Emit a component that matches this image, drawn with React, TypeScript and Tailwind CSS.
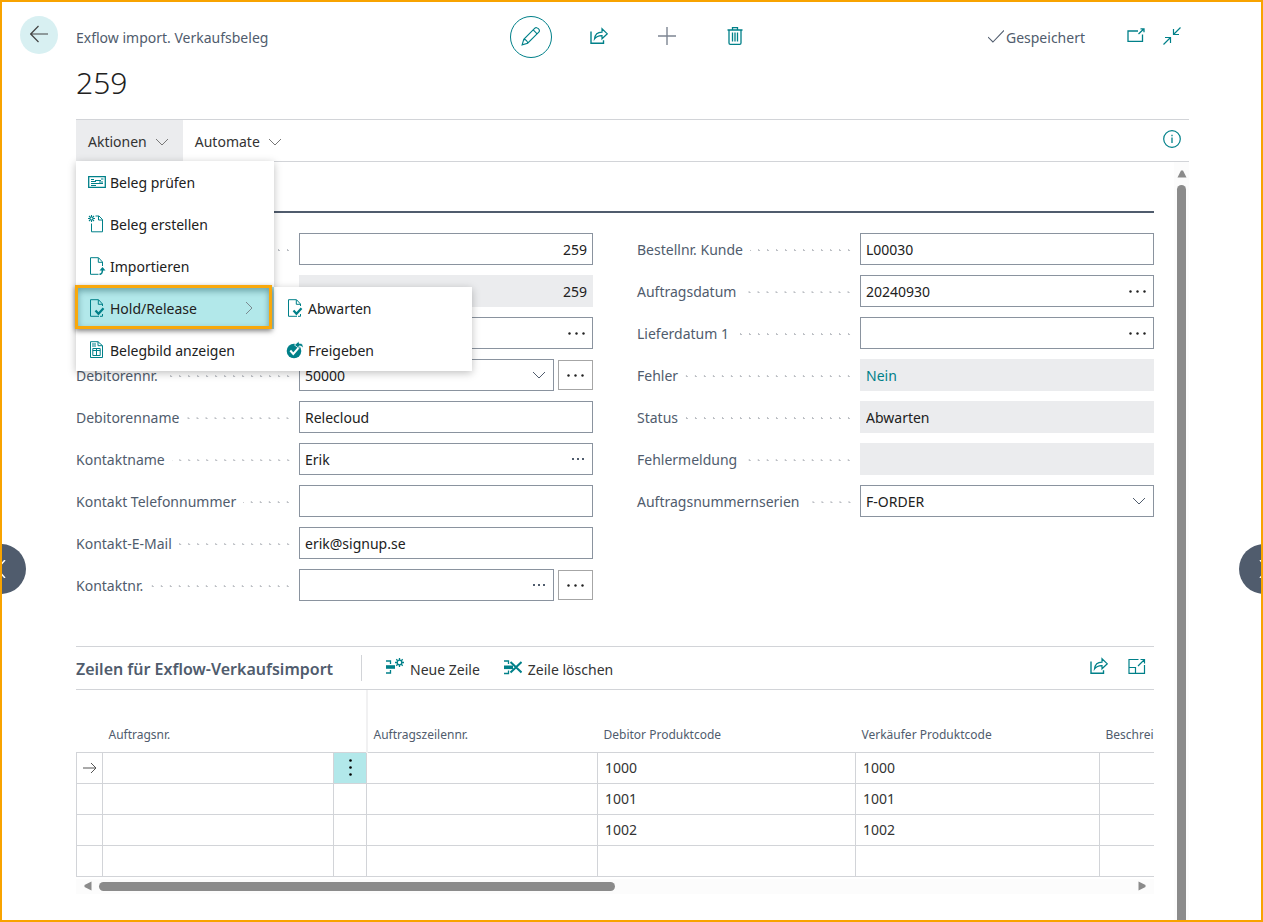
import type { ReactNode } from "react";

type FieldProps = {
  id: string;
  label?: string;
  name?: string;
  value?: string;
  kind?: "text" | "readonly" | "select";
  align?: "left" | "right";
  lookup?: "bold" | "light";
  link?: boolean;
  extra?: boolean;
};

const leftFields: FieldProps[] = [
  { id: "entry-no", name: "Lfd. Nr.", value: "259", align: "right" },
  {
    id: "import-no",
    name: "Importnr.",
    value: "259",
    align: "right",
    kind: "readonly",
  },
  { id: "order-type", name: "Belegart", lookup: "bold" },
  {
    id: "customer-no",
    label: "Debitorennr.",
    value: "50000",
    kind: "select",
    extra: true,
  },
  { id: "customer-name", label: "Debitorenname", value: "Relecloud" },
  { id: "contact-name", label: "Kontaktname", value: "Erik", lookup: "light" },
  { id: "contact-phone", label: "Kontakt Telefonnummer" },
  { id: "contact-mail", label: "Kontakt-E-Mail", value: "erik@signup.se" },
  { id: "contact-no", label: "Kontaktnr.", lookup: "light", extra: true },
];

const rightFields: FieldProps[] = [
  { id: "your-order", label: "Bestellnr. Kunde", value: "L00030" },
  {
    id: "order-date",
    label: "Auftragsdatum",
    value: "20240930",
    lookup: "bold",
  },
  { id: "delivery-date", label: "Lieferdatum 1", lookup: "bold" },
  { id: "error", label: "Fehler", value: "Nein", kind: "readonly", link: true },
  { id: "status", label: "Status", value: "Abwarten", kind: "readonly" },
  { id: "error-message", label: "Fehlermeldung", kind: "readonly" },
  {
    id: "no-series",
    label: "Auftragsnummernserien",
    value: "F-ORDER",
    kind: "select",
  },
];

const lines = [
  { customerCode: "1000", vendorCode: "1000" },
  { customerCode: "1001", vendorCode: "1001" },
  { customerCode: "1002", vendorCode: "1002" },
  { customerCode: "", vendorCode: "" },
];

const Icon = ({
  children,
  className = "h-[18px] w-[18px]",
}: {
  children: ReactNode;
  className?: string;
}) => (
  <svg
    viewBox="0 0 18 18"
    fill="none"
    stroke="currentColor"
    className={`shrink-0 ${className}`}
    aria-hidden="true"
  >
    {children}
  </svg>
);

const ChevronDown = () => (
  <svg
    viewBox="0 0 14 8"
    fill="none"
    stroke="currentColor"
    className="h-2 w-3.5 shrink-0"
    aria-hidden="true"
  >
    <path d="M1 1l6 6 6-6" />
  </svg>
);

const ShareIcon = () => (
  <Icon>
    <path d="M1 4.5v11.8h12.5v-3" strokeWidth="1.4" />
    <path
      d="M4.5 12C5 7.5 8 5.2 12 5.2V1.7L17.3 6.8 12 11.8V8.6C8.500 8.500 6.300 9.500 4.500 12z"
      strokeWidth="1.2"
    />
  </Icon>
);

const DocCheckIcon = () => (
  <Icon>
    <path d="M14.500 7V5L10.500 .7H2.500v16.600h8.500M10.300 .9v4.400h4M12 17.300h2.500V15" />
    <path d="M7.500 11.500l3 3.300 5-5.600" strokeWidth="2.200" />
  </Icon>
);

const Dots = ({ light = false }: { light?: boolean }) =>
  light ? (
    <svg viewBox="0 0 14 2" className="h-0.5 w-3.5" fill="#505c6d">
      <path d="M1 0h2v2H1zM6 0h2v2H6zM11 0h2v2h-2z" />
    </svg>
  ) : (
    <svg viewBox="0 0 17 3" className="h-[3px] w-[17px]" fill="#212121">
      <circle cx="1.500" cy="1.500" r="1.200" />
      <circle cx="8.500" cy="1.500" r="1.200" />
      <circle cx="15.500" cy="1.500" r="1.200" />
    </svg>
  );

const FieldControl = ({
  id,
  label,
  name,
  value = "",
  kind = "text",
  align = "left",
  lookup,
  link,
}: FieldProps) => {
  if (kind === "select") {
    return (
      <div className="relative flex h-8 min-w-0 flex-1 items-center border border-[#8a939f] bg-white">
        <select
          id={id}
          defaultValue={value}
          className="h-full w-full appearance-none bg-transparent pl-[5px] pr-8 pt-0.5 text-[#212121] outline-none"
        >
          <option>{value}</option>
        </select>
        <span className="pointer-events-none absolute right-[7px] text-[#505c6d]">
          <ChevronDown />
        </span>
      </div>
    );
  }
  return (
    <div
      className={`flex h-8 min-w-0 flex-1 items-center border ${
        kind === "readonly"
          ? "border-[#ebecee] bg-[#ebecee]"
          : "border-[#8a939f] bg-white"
      }`}
    >
      <input
        id={id}
        type="text"
        aria-label={label ? undefined : name}
        defaultValue={value}
        readOnly={kind === "readonly"}
        className={`h-full min-w-0 flex-1 bg-transparent px-[5px] outline-none ${
          align === "right" ? "text-right" : "text-left"
        } ${link ? "text-[#008089]" : "text-[#212121]"}`}
      />
      {lookup && (
        <button
          type="button"
          aria-label="Nachschlagen"
          className="flex h-full items-center pr-[7px]"
        >
          <Dots light={lookup === "light"} />
        </button>
      )}
    </div>
  );
};

const Field = (props: FieldProps) => (
  <div className="flex items-center">
    <div className="flex w-[223px] shrink-0 items-center pt-0.5">
      {props.label && (
        <label htmlFor={props.id} className="whitespace-nowrap text-[#505c6d]">
          {props.label}
        </label>
      )}
      <span className="mx-[7px] h-[3px] flex-1 bg-[radial-gradient(circle,#bcbfc4_1px,transparent_1px)] bg-[length:9px_3px] bg-right bg-repeat-x" />
    </div>
    <div className="flex min-w-0 flex-1 items-center gap-1">
      <FieldControl {...props} />
      {props.extra && (
        <button
          type="button"
          aria-label="Mehr anzeigen"
          className="flex h-[30px] w-[35px] items-center justify-center border border-[#a6a6a6]"
        >
          <Dots />
        </button>
      )}
    </div>
  </div>
);

const MenuItem = ({
  icon,
  label,
  active = false,
}: {
  icon: ReactNode;
  label: string;
  active?: boolean;
}) => (
  <button
    type="button"
    role="menuitem"
    className={`relative flex h-[42px] w-full items-center gap-1 pl-3 pr-[21px] text-left text-[#212121] ${
      active ? "bg-[#b2e8ea]" : "bg-white"
    }`}
  >
    <span className="text-[#008089]">{icon}</span>
    <span className="flex-1 whitespace-nowrap pt-0.5">{label}</span>
    {active && (
      <>
        <svg
          viewBox="0 0 8 14"
          fill="none"
          stroke="#7a8a90"
          className="h-3.5 w-2"
          aria-hidden="true"
        >
          <path d="M1 1l6 6-6 6" />
        </svg>
        <span className="absolute -top-0.5 -left-px bottom-0 right-0.5 z-10 border-[3px] border-[#f8a80c] shadow-[0_2px_5px_rgba(0,0,0,0.5),inset_0_3px_6px_rgba(0,60,70,0.4)]" />
      </>
    )}
  </button>
);

const ActionsMenu = () => (
  <div
    role="menu"
    className="absolute left-0 top-full z-20 w-[198px] bg-white shadow-[0_2px_8px_rgba(0,0,0,0.25)]"
  >
    <MenuItem
      label="Beleg prüfen"
      icon={
        <Icon>
          <path d="M.7 3.700h16.600v10.600H.7z" strokeWidth="1.300" />
          <path d="M3 6.500h3M3 8.500h5M3 10.500h12M3 12.500h5M7 7.500h6M11 9h4M13 6h2.500" />
        </Icon>
      }
    />
    <MenuItem
      label="Beleg erstellen"
      icon={
        <Icon>
          <path d="M3.500 8.500v8.300h11V4.500L11 1H7.500M10.500 1v4h4" />
          <path
            d="M3.500 0v7M0 3.500h7M1 1l5 5M6 1L1 6"
            strokeWidth="1.100"
          />
          <circle cx="3.500" cy="3.500" r="1" fill="#fff" stroke="none" />
        </Icon>
      }
    />
    <MenuItem
      label="Importieren"
      icon={
        <Icon>
          <path d="M14.500 9V5L10.500 .7H2.500v16.600h8M10.300 .9v4.400h4" />
          <path d="M11.500 17.300c2.500 0 3-1.300 3-5" strokeWidth="1.600" />
          <path d="M11.500 13.500l3-3.500 3 3.500z" fill="currentColor" stroke="none" />
        </Icon>
      }
    />
    <div className="relative">
      <MenuItem label="Hold/Release" icon={<DocCheckIcon />} active />
      <div
        role="menu"
        className="absolute left-full top-0 w-[198px] bg-white shadow-[0_2px_8px_rgba(0,0,0,0.25)]"
      >
        <MenuItem label="Abwarten" icon={<DocCheckIcon />} />
        <MenuItem
          label="Freigeben"
          icon={
            <Icon>
              <circle
                cx="8"
                cy="10"
                r="7.300"
                fill="currentColor"
                stroke="none"
              />
              <path d="M4.300 9.500l3 3.500 5-5.800" stroke="#fff" strokeWidth="2" />
              <path
                d="M8.500 4L13 0v2.200c3 0 4.500 1.300 4 5-1.200-1.800-2.300-2.200-4-2.200v2.500z"
                fill="currentColor"
                stroke="#fff"
                strokeWidth=".8"
              />
            </Icon>
          }
        />
      </div>
    </div>
    <MenuItem
      label="Belegbild anzeigen"
      icon={
        <Icon>
          <path d="M2.500 16.500V.7H10l4.500 4v11.800zM10 .7v4h4.500M4 3h4M4 5h4" />
          <path d="M4.800 7.500h7.400v7H4.800zM4.800 9.500h7.400M8.500 7.500v7" />
        </Icon>
      }
    />
  </div>
);

const Header = () => (
  <header>
    <div className="grid h-[42px] grid-cols-[1fr_auto_1fr] items-center">
      <p className="pt-0.5 text-[#505c6d]">Exflow import. Verkaufsbeleg</p>
      <div className="flex gap-[26px] text-[#008089]">
        <button
          type="button"
          aria-label="Bearbeiten"
          className="flex h-[42px] w-[42px] items-center justify-center rounded-full border border-[#008089] pb-0.5"
        >
          <Icon className="h-5 w-5">
            <path d="M1 17l1.500-5L12.500 2c1.800-1.800 5.300 1.700 3.500 3.500L6 15.500zM2.500 12c1.800 0 3.500 1.700 3.500 3.500M11 3.500L14.500 7" />
          </Icon>
        </button>
        <button
          type="button"
          aria-label="Teilen"
          className="flex w-[42px] items-center justify-center pb-0.5"
        >
          <ShareIcon />
        </button>
        <button
          type="button"
          aria-label="Neu"
          className="flex w-[42px] items-center justify-center pb-0.5 text-[#7d8592]"
        >
          <Icon>
            <path d="M9 0v18M0 9h18" strokeWidth="1.400" />
          </Icon>
        </button>
        <button
          type="button"
          aria-label="Löschen"
          className="flex w-[42px] items-center justify-center pb-0.5"
        >
          <Icon>
            <path
              d="M1.500 3h15M6.500 3V.7h5V3M3 3v13q0 1.300 1.300 1.300h9.400q1.300 0 1.300-1.300V3"
              strokeWidth="1.300"
            />
            <path d="M6.500 5.500v9M9 5.500v9M11.500 5.500v9" strokeWidth="1.300" />
          </Icon>
        </button>
      </div>
      <div className="flex items-center justify-end gap-[18px] pr-2 text-[#008089]">
        <span className="mr-6 flex items-center gap-0.5 pt-0.5 text-[#505c6d]">
          <Icon className="h-4 w-4">
            <path d="M0 8l5.500 5.500L18 .5" strokeWidth="1.200" />
          </Icon>
          Gespeichert
        </span>
        <button
          type="button"
          aria-label="In neuem Fenster öffnen"
          className="pb-0.5"
        >
          <Icon>
            <path d="M11 4H1v10.300h14.500V7.500" strokeWidth="1.300" />
            <path d="M11.500 7L17 1.800M13.500 1.800H17v3.500" strokeWidth="1.300" />
          </Icon>
        </button>
        <button type="button" aria-label="Verkleinern" className="pb-0.5">
          <Icon>
            <path
              d="M17.500 .5l-7 7M10.500 2v5.500H16M.5 17.500l7-7M2 10.500h5.500V16"
              strokeWidth="1.200"
            />
          </Icon>
        </button>
      </div>
    </div>
    <h1 className="mb-[11px] text-[30px] font-light leading-[50px] text-[#212121]">
      259
    </h1>
  </header>
);

const ActionBar = () => (
  <nav className="flex h-[43px] items-stretch border-y border-[#d2d4d8] text-[#333]">
    <div className="relative flex">
      <button
        type="button"
        aria-expanded="true"
        className="flex items-center gap-2 bg-[#ebecee] pl-3 pr-3.5 pt-0.5"
      >
        Aktionen
        <span className="text-[#777]">
          <ChevronDown />
        </span>
      </button>
      <ActionsMenu />
    </div>
    <button
      type="button"
      className="flex items-center gap-2 pl-3 pr-3.5 pt-0.5"
    >
      Automate
      <span className="text-[#777]">
        <ChevronDown />
      </span>
    </button>
    <button
      type="button"
      aria-label="Information"
      className="ml-auto mr-2 flex items-center pb-1 text-[#008089]"
    >
      <Icon>
        <circle cx="9" cy="9" r="8.300" strokeWidth="1.200" />
        <path d="M9 7.500V13M9 4.800v1.400" strokeWidth="1.300" />
      </Icon>
    </button>
  </nav>
);

const LinesPart = () => (
  <section className="mt-[45px]">
    <div className="flex h-11 items-center border-y border-[#d2d4d8]">
      <h2 className="whitespace-nowrap pt-0.5 text-base font-semibold text-[#505c6d]">
        Zeilen für Exflow-Verkaufsimport
      </h2>
      <span className="ml-7 mr-6 h-[26px] w-px bg-[#d2d4d8]" />
      <button
        type="button"
        className="mr-6 flex items-center gap-1.5 text-[#333]"
      >
        <span className="pb-0.5 text-[#008089]">
          <Icon>
            <path d="M0 3h4.500v3M0 15h4.500v-3" strokeWidth="1.300" />
            <path d="M0 7.200h9v3.600H0z" fill="currentColor" stroke="none" />
            <circle cx="13.500" cy="4.500" r="2.300" strokeWidth="1.300" />
            <path
              d="M13.500 0v2M13.500 7v2M9 4.500h2M16 4.500h2M10.300 1.300l1.400 1.400M15.300 6.300l1.400 1.400M16.700 1.300l-1.400 1.400M11.700 6.300l-1.400 1.400"
              strokeWidth="1.300"
            />
          </Icon>
        </span>
        <span className="pt-1">Neue Zeile</span>
      </button>
      <button
        type="button"
        className="flex items-center gap-1.5 text-[#333]"
      >
        <span className="pb-0.5 text-[#008089]">
          <Icon>
            <path d="M0 3h4.500v3M0 15.500h4.500v-3" strokeWidth="1.300" />
            <path d="M0 7.500h9v3.600H0z" fill="currentColor" stroke="none" />
            <path d="M6.500 4L17.500 14.500M17.500 4L6.500 14.500" strokeWidth="2" />
          </Icon>
        </span>
        <span className="pt-1">Zeile löschen</span>
      </button>
      <div className="ml-auto mr-2 flex items-center gap-5 pb-1 text-[#008089]">
        <button type="button" aria-label="Teilen">
          <ShareIcon />
        </button>
        <button type="button" aria-label="Erweitern">
          <Icon>
            <path
              d="M10.500 2.500H1v13.800h15.500V8M1 10.500h6.500v5.800M10 9l6.500-6.500M12.500 2.500h4v4"
              strokeWidth="1.200"
            />
          </Icon>
        </button>
      </div>
    </div>

    <table className="w-full table-fixed border-collapse text-left text-[#333]">
      <colgroup>
        <col className="w-[26px]" />
        <col className="w-[231px]" />
        <col className="w-[33px]" />
        <col className="w-[231px]" />
        <col className="w-[258px]" />
        <col className="w-[244px]" />
        <col />
      </colgroup>
      <thead>
        <tr className="h-[62px] text-[12px] leading-4 text-[#505c6d] [&>th]:pb-[9px] [&>th]:align-bottom [&>th]:font-normal [&>th]:whitespace-nowrap">
          <th />
          <th className="pl-1.5">Auftragsnr.</th>
          <th />
          <th className="border-l-2 border-[#f1f1f2] pl-1.5">
            Auftragszeilennr.
          </th>
          <th className="pl-1.5">Debitor Produktcode</th>
          <th className="pl-1.5">Verkäufer Produktcode</th>
          <th className="pl-1.5">Beschrei</th>
        </tr>
      </thead>
      <tbody>
        {lines.map((line, index) => (
          <tr
            key={index}
            className="h-[31px] border-y border-[#d2d4d8] [&>td]:border-l [&>td]:border-[#d2d4d8]"
          >
            <td>
              {index === 0 && (
                <svg
                  viewBox="0 0 14 12"
                  fill="none"
                  stroke="#555"
                  className="mx-auto h-3 w-3.5"
                  aria-hidden="true"
                >
                  <path d="M0 6h13M8 1l5 5-5 5" />
                </svg>
              )}
            </td>
            <td />
            <td className={index === 0 ? "bg-[#b2e8ea]" : ""}>
              {index === 0 && (
                <button
                  type="button"
                  aria-label="Weitere Optionen"
                  className="flex w-full justify-center"
                >
                  <svg viewBox="0 0 3 17" className="h-[17px] w-[3px]">
                    <circle cx="1.500" cy="1.500" r="1.300" />
                    <circle cx="1.500" cy="8.500" r="1.300" />
                    <circle cx="1.500" cy="15.500" r="1.300" />
                  </svg>
                </button>
              )}
            </td>
            <td />
            <td className="pl-[7px]">{line.customerCode}</td>
            <td className="pl-[7px]">{line.vendorCode}</td>
            <td />
          </tr>
        ))}
      </tbody>
    </table>

    <div className="mt-0.5 flex h-[15px] items-center bg-[#fcfcfc] px-2">
      <svg viewBox="0 0 8 10" className="h-2.5 w-2" fill="#8b8b8b">
        <path d="M7.500 .5v9L.5 6V4z" />
      </svg>
      <div className="mx-[7px] flex-1">
        <div className="h-[9px] w-1/2 rounded-full bg-[#8b8b8b]" />
      </div>
      <svg viewBox="0 0 8 10" className="h-2.5 w-2" fill="#8b8b8b">
        <path d="M.5 .5v9L7.500 6V4z" />
      </svg>
    </div>
  </section>
);

const App = () => {
  return (
    <div className="relative flex min-h-screen gap-[18px] overflow-hidden border-2 border-[#f8a300] bg-white pl-[18px] pr-[72px] pt-3.5 font-['Noto_Sans','Open_Sans',sans-serif] text-[14px] leading-5 text-[#212121]">
      <button
        type="button"
        aria-label="Zurück"
        className="flex h-[38px] w-[38px] shrink-0 items-center justify-center rounded-full bg-[#d8f0f2] pb-0.5 text-[#444]"
      >
        <Icon>
          <path d="M0 9h18M8.500 1L.7 9l7.800 8" strokeWidth="1.200" />
        </Icon>
      </button>

      <main className="flex min-w-0 flex-1 flex-col">
        <Header />
        <ActionBar />
        <div className="flex flex-1 gap-5">
          <div className="min-w-0 flex-1">
            <div className="h-[51px] border-b-2 border-[#505c6d]" />
            <form className="grid grid-cols-2 gap-x-11 pt-5">
              <div className="flex flex-col gap-2.5">
                {leftFields.map((field) => (
                  <Field key={field.id} {...field} />
                ))}
              </div>
              <div className="flex flex-col gap-2.5">
                {rightFields.map((field) => (
                  <Field key={field.id} {...field} />
                ))}
              </div>
            </form>
            <LinesPart />
          </div>
          <div className="flex w-[15px] shrink-0 flex-col items-center bg-[#fcfcfc] pt-2">
            <svg viewBox="0 0 10 8" className="h-2 w-2.5" fill="#8b8b8b">
              <path d="M.5 7.500h9L6 .5H4z" />
            </svg>
            <div className="mt-[7px] w-[9px] flex-1 rounded-t-full bg-[#8b8b8b]" />
          </div>
        </div>
      </main>

      <button
        type="button"
        aria-label="Vorheriger Datensatz"
        className="absolute -left-[26px] top-[542px] flex h-[50px] w-[50px] items-center justify-center rounded-full bg-[#505c6d] text-white"
      >
        <svg viewBox="0 0 10 18" fill="none" stroke="currentColor" className="h-[18px] w-2.5">
          <path d="M9 0L1 9l8 9" strokeWidth="1.500" />
        </svg>
      </button>
      <button
        type="button"
        aria-label="Nächster Datensatz"
        className="absolute -right-[28px] top-[542px] flex h-[50px] w-[50px] items-center justify-center rounded-full bg-[#505c6d] text-white"
      >
        <svg viewBox="0 0 10 18" fill="none" stroke="currentColor" className="h-[18px] w-2.5">
          <path d="M1 0l8 9-8 9" strokeWidth="1.500" />
        </svg>
      </button>
    </div>
  );
};

export default App;
